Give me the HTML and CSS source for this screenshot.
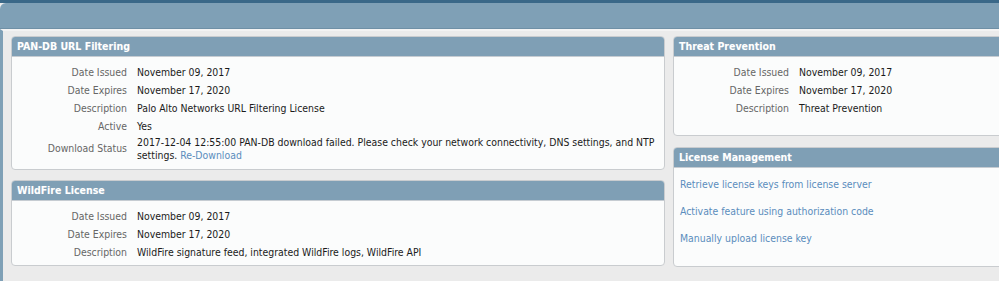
FILE: index.html
```html
<!DOCTYPE html>
<html lang="en">

<head>
    <meta charset="UTF-8">
    <title>Licenses</title>
    <link rel="stylesheet" href="styles.css">
</head>

<body>
    <div class="topbar"></div>
    <div class="page">
        <div class="column left">
            <div class="panel url">
                <div class="panel-title">PAN-DB URL Filtering</div>
                <table class="info">
                    <tr><td class="label">Date Issued</td><td>November 09, 2017</td></tr>
                    <tr><td class="label">Date Expires</td><td>November 17, 2020</td></tr>
                    <tr><td class="label">Description</td><td>Palo Alto Networks URL Filtering License</td></tr>
                    <tr><td class="label">Active</td><td>Yes</td></tr>
                    <tr class="multi">
                        <td class="label">Download Status</td>
                        <td>2017-12-04 12:55:00 PAN-DB download failed. Please check your network connectivity, DNS settings, and NTP settings. <a href="#">Re-Download</a></td>
                    </tr>
                </table>
            </div>
            <div class="panel wildfire">
                <div class="panel-title">WildFire License</div>
                <table class="info">
                    <tr><td class="label">Date Issued</td><td>November 09, 2017</td></tr>
                    <tr><td class="label">Date Expires</td><td>November 17, 2020</td></tr>
                    <tr><td class="label">Description</td><td>WildFire signature feed, integrated WildFire logs, WildFire API</td></tr>
                </table>
            </div>
        </div>
        <div class="column right">
            <div class="panel threat">
                <div class="panel-title">Threat Prevention</div>
                <table class="info">
                    <tr><td class="label">Date Issued</td><td>November 09, 2017</td></tr>
                    <tr><td class="label">Date Expires</td><td>November 17, 2020</td></tr>
                    <tr><td class="label">Description</td><td>Threat Prevention</td></tr>
                </table>
            </div>
            <div class="panel manage">
                <div class="panel-title">License Management</div>
                <ul class="links">
                    <li><a href="#">Retrieve license keys from license server</a></li>
                    <li><a href="#">Activate feature using authorization code</a></li>
                    <li><a href="#">Manually upload license key</a></li>
                </ul>
            </div>
        </div>
    </div>
</body>

</html>
```

FILE: styles.css
```css
body {
    margin: 0;
    width: 999px;
    height: 281px;
    overflow: hidden;
    background-color: #ebebeb;
    font-family: 'DejaVu Sans Condensed', 'DejaVu Sans', sans-serif;
    font-stretch: condensed;
    font-size: 10.4px;
    color: #1a1a1a;
    border-top: 3px solid #3a6888;
    box-sizing: border-box;
}

.topbar {
    height: 25px;
    background-color: #7fa0b6;
    border-bottom: 1px solid #6f90a6;
    border-top-left-radius: 6px;
    width: 1010px;
}

.page {
    display: flex;
    gap: 8px;
    border-left: 3px solid #7fa0b6;
    padding: 5px 0 0 8px;
    height: 250px;
    border-top: 2px solid #f3f3f3;
    overflow: hidden;
}

.column {
    display: flex;
    flex-direction: column;
    flex-shrink: 0;
}

.left {
    width: 654px;
    gap: 10px;
}

.right {
    width: 340px;
    gap: 11px;
}

.panel {
    background-color: #fbfcfc;
    border: 1px solid #c9cccf;
    border-radius: 4px;
    overflow: hidden;
    box-sizing: border-box;
}

.panel-title {
    height: 19px;
    line-height: 19px;
    background-color: #7f9fb5;
    border-bottom: 1px solid #c6ccd2;
    color: #ffffff;
    font-weight: bold;
    font-size: 10.5px;
    padding-left: 5px;
    text-shadow: 0 0 1px #9ab0c0;
}

.info {
    border-collapse: collapse;
    margin-top: 6px;
}

.info td {
    height: 18px;
    padding: 0 0 0 10px;
    vertical-align: middle;
}

.info td.label {
    width: 115px;
    padding: 0;
    text-align: right;
    color: #666666;
    white-space: nowrap;
}

.multi td {
    line-height: 13px;
    padding-top: 1px;
    padding-right: 0;
}

a {
    color: #5a8dbd;
    text-decoration: none;
}

.url {
    height: 134px;
}

.wildfire {
    height: 86px;
}

.threat {
    height: 100px;
}

.manage {
    height: 120px;
}

.links {
    list-style: none;
    margin: 0;
    padding: 9px 0 0 6px;
}

.links li {
    height: 27px;
    line-height: 14px;
}
```
